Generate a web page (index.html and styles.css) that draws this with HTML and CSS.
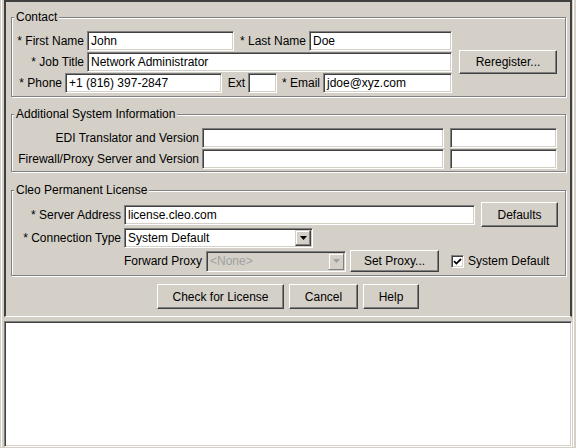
FILE: index.html
```html
<!DOCTYPE html>
<html>
<head>
<meta charset="utf-8">
<link rel="stylesheet" href="styles.css">
</head>
<body>
<div class="window">
  <div class="split">
    <div class="panel">
      <fieldset class="group contact">
        <legend>Contact</legend>
        <div class="contact-body">
          <div class="rows">
            <div class="row">
              <span class="lbl w70">* First Name</span><span class="field w147">John</span><span class="lbl w75">* Last Name</span><span class="field w143">Doe</span>
            </div>
            <div class="row">
              <span class="lbl w70">* Job Title</span><span class="field w365">Network Administrator</span>
            </div>
            <div class="row">
              <span class="lbl w48">* Phone</span><span class="field w157">+1 (816) 397-2847</span><span class="lbl w26">Ext</span><span class="field w29"></span><span class="lbl w46">* Email</span><span class="field w129">jdoe@xyz.com</span>
            </div>
          </div>
          <button type="button" class="btn rereg">Reregister...</button>
        </div>
      </fieldset>

      <fieldset class="group additional">
        <legend>Additional System Information</legend>
        <div class="rows">
          <div class="row">
            <span class="lbl w185">EDI Translator and Version</span><span class="field w242"></span><span class="field w107 gap6"></span>
          </div>
          <div class="row">
            <span class="lbl w185">Firewall/Proxy Server and Version</span><span class="field w242"></span><span class="field w107 gap6"></span>
          </div>
        </div>
      </fieldset>

      <fieldset class="group license">
        <legend>Cleo Permanent License</legend>
        <div class="row row-server">
          <span class="lbl w107">* Server Address</span><span class="field w351">license.cleo.com</span>
          <button type="button" class="btn defaults">Defaults</button>
        </div>
        <div class="row row-conn">
          <span class="lbl w107">* Connection Type</span>
          <div class="combo w189">
            <span class="combo-val">System Default</span>
            <span class="combo-arrow"><svg width="7" height="4" viewBox="0 0 7 4"><path d="M0 0h7L3.5 4z" fill="#000"/></svg></span>
          </div>
        </div>
        <div class="row row-proxy">
          <span class="lbl w82 indent">Forward Proxy</span>
          <div class="combo disabled w140">
            <span class="combo-val">&lt;None&gt;</span>
            <span class="combo-arrow"><svg width="7" height="4" viewBox="0 0 7 4"><path d="M0 0h7L3.5 4z" fill="#a0a0a0"/></svg></span>
          </div>
          <button type="button" class="btn setproxy">Set Proxy...</button>
          <span class="check"><svg width="9" height="9" viewBox="0 0 9 9"><path d="M1 4.2l2.4 2.4L8 2" fill="none" stroke="#000" stroke-width="1.8"/></svg></span>
          <span class="check-label">System Default</span>
        </div>
      </fieldset>

      <div class="actions">
        <button type="button" class="btn w127">Check for License</button>
        <button type="button" class="btn w69">Cancel</button>
        <button type="button" class="btn w56">Help</button>
      </div>
    </div>
    <div class="log"></div>
  </div>
</div>
</body>
</html>
```

FILE: styles.css
```css
html, body {
  margin: 0;
  background: #d4d0c8;
}
body {
  font-family: "Liberation Sans", Arial, sans-serif;
  font-size: 12px;
  color: #000;
}
.window {
  width: 576px;
  height: 448px;
  box-sizing: border-box;
  padding: 0 2px 1px 1px;
  display: flex;
  flex-direction: column;
}
.split {
  flex: 1;
  display: flex;
  flex-direction: column;
  border-left: 1px solid #fff;
  border-right: 1px solid #fff;
  padding: 0 1px 0 2px;
}
.panel {
  height: 317px;
  box-sizing: border-box;
  border-top: 2px solid #404040;
  border-left: 2px solid #404040;
  border-right: 2px solid #404040;
  border-bottom: 1px solid #fff;
  padding-top: 8px;
}
.log {
  flex: 1;
  margin-top: 4px;
  background: #fff;
  border: 1px solid;
  border-color: #808080 #fff #fff #808080;
  box-shadow: inset 1px 1px 0 #404040, inset -1px -1px 0 #d4d0c8;
}

/* group boxes */
.group {
  margin: 0 0 0 5px;
  width: 555px;
  box-sizing: border-box;
  min-inline-size: 0;
  border: 1px solid #808080;
  box-shadow: inset 1px 1px 0 #fff, 1px 1px 0 #fff;
  padding: 7px 0 3px 5px;
}
.group legend {
  margin-left: -3px;
  padding: 0 2px;
  line-height: 14px;
  background: #d4d0c8;
  white-space: nowrap;
}
.additional {
  margin-top: 10px;
  padding-bottom: 2px;
}
.license {
  margin-top: 11px;
  padding-top: 5px;
  padding-bottom: 3px;
}

.contact-body {
  display: flex;
  align-items: center;
}
.rows {
  display: flex;
  flex-direction: column;
  gap: 1px;
}
.row {
  display: flex;
  align-items: center;
  height: 20px;
}
.row-server { height: 25px; }
.row-conn { margin-top: 1px; }
.row-proxy { height: 22px; margin-top: 2px; }

.lbl {
  box-sizing: border-box;
  text-align: right;
  padding-right: 3px;
  white-space: nowrap;
}
.indent { margin-left: 107px; padding-right: 5px; }

.field {
  height: 20px;
  box-sizing: border-box;
  background: #fff;
  border: 1px solid;
  border-color: #808080 #fff #fff #808080;
  box-shadow: inset 1px 1px 0 #404040, inset -1px -1px 0 #d4d0c8;
  padding: 0 3px;
  line-height: 18px;
  white-space: nowrap;
  overflow: hidden;
}
.gap6 { margin-left: 6px; }

/* widths */
.w26 { width: 26px; }
.w29 { width: 29px; }
.w46 { width: 46px; }
.w48 { width: 48px; }
.w56 { width: 56px; }
.w69 { width: 69px; }
.w70 { width: 70px; }
.w75 { width: 75px; }
.w82 { width: 82px; }
.w107 { width: 107px; }
.w127 { width: 127px; }
.w129 { width: 129px; }
.w140 { width: 140px; }
.w143 { width: 143px; }
.w147 { width: 147px; }
.w157 { width: 157px; }
.w185 { width: 185px; }
.w189 { width: 189px; }
.w242 { width: 242px; }
.w351 { width: 351px; }
.w365 { width: 365px; }

/* buttons */
.btn {
  box-sizing: border-box;
  height: 25px;
  margin: 0;
  padding: 0;
  border: 1px solid;
  border-color: #fff #404040 #404040 #fff;
  box-shadow: inset -1px -1px 0 #808080, inset 1px 1px 0 #d4d0c8;
  background: #d4d0c8;
  font: inherit;
  color: #000;
  display: flex;
  align-items: center;
  justify-content: center;
  white-space: nowrap;
}
.rereg {
  width: 98px;
  height: 24px;
  margin-left: 7px;
}
.defaults {
  width: 77px;
  margin-left: 6px;
}
.setproxy {
  width: 89px;
  height: 22px;
  margin-left: 4px;
}

.actions {
  display: flex;
  justify-content: center;
  gap: 5px;
  margin-top: 8px;
}

/* combo boxes */
.combo {
  display: flex;
  height: 20px;
  box-sizing: border-box;
  background: #fff;
  border: 1px solid;
  border-color: #808080 #fff #fff #808080;
  box-shadow: inset 1px 1px 0 #404040, inset -1px -1px 0 #d4d0c8;
  padding: 1px;
}
.combo-val {
  flex: 1;
  padding-left: 2px;
  line-height: 16px;
  white-space: nowrap;
  overflow: hidden;
}
.combo-arrow {
  width: 16px;
  box-sizing: border-box;
  background: #d4d0c8;
  border: 1px solid;
  border-color: #d4d0c8 #404040 #404040 #d4d0c8;
  box-shadow: inset -1px -1px 0 #808080, inset 1px 1px 0 #fff;
  display: flex;
  align-items: center;
  justify-content: center;
}
.combo.disabled {
  height: 21px;
  background: #d4d0c8;
}
.combo.disabled .combo-val {
  color: #a0a0a0;
  line-height: 17px;
}
.combo.disabled .combo-arrow {
  border-color: #d4d0c8 #808080 #808080 #d4d0c8;
  box-shadow: inset 1px 1px 0 #fff;
}

/* checkbox */
.check {
  width: 13px;
  height: 13px;
  box-sizing: border-box;
  margin-left: 12px;
  background: #fff;
  border: 1px solid;
  border-color: #808080 #fff #fff #808080;
  box-shadow: inset 1px 1px 0 #404040, inset -1px -1px 0 #d4d0c8;
  display: flex;
  align-items: center;
  justify-content: center;
}
.check-label {
  margin-left: 4px;
  white-space: nowrap;
}
```
